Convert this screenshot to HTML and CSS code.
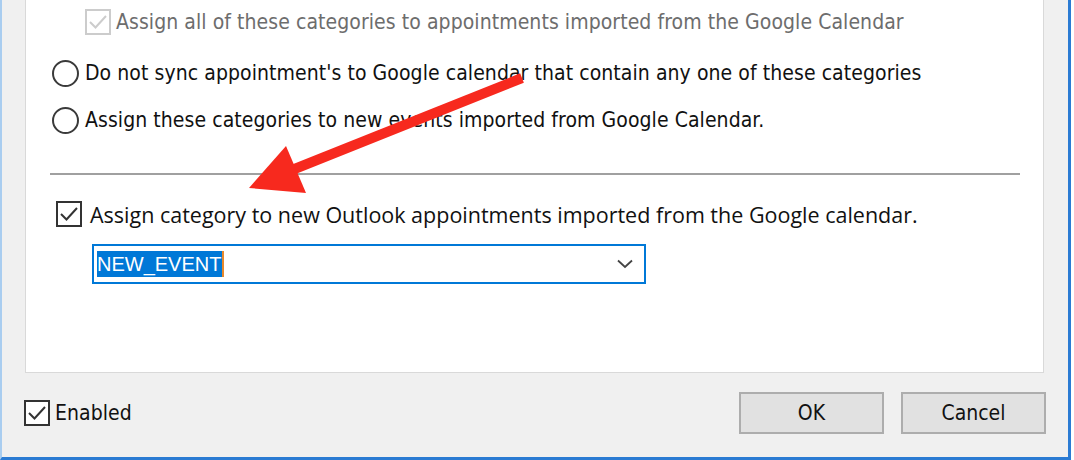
FILE: index.html
```html
<!DOCTYPE html>
<html lang="en">
<head>
  <meta charset="UTF-8" />
  <title>Category settings</title>
  <link rel="stylesheet" href="styles.css">
</head>
<body>

<div class="window">
  <div class="panel">
    <div class="option option--sub option--disabled">
      <svg class="check" width="26" height="26" viewBox="0 0 26 26">
        <rect x="1" y="1" width="24" height="24" fill="#fff" stroke="#cccccc" stroke-width="2"/>
        <polyline points="5,13 10.5,18.5 21,7" fill="none" stroke="#cccccc" stroke-width="2"/>
      </svg>
      <span>Assign all of these categories to appointments imported from the Google Calendar</span>
    </div>
    <div class="option option--radio">
      <span class="radio"></span>
      <span>Do not sync appointment's to Google calendar that contain any one of these categories</span>
    </div>
    <div class="option option--radio option--second">
      <span class="radio"></span>
      <span>Assign these categories to new events imported from Google Calendar.</span>
    </div>

    <div class="separator"></div>

    <div class="option option--new">
      <svg class="check" width="26" height="26" viewBox="0 0 26 26">
        <rect x="1" y="1" width="24" height="24" fill="#fff" stroke="#333333" stroke-width="2"/>
        <polyline points="5,13 10.5,18.5 21,7" fill="none" stroke="#333333" stroke-width="2"/>
      </svg>
      <span>Assign category to new Outlook appointments imported from the Google calendar.</span>
    </div>

    <div class="combo">
      <span class="combo__value">NEW_EVENT</span>
      <svg class="combo__chevron" width="16" height="10" viewBox="0 0 16 10">
        <polyline points="1,1.5 8,8 15,1.5" fill="none" stroke="#444" stroke-width="1.8"/>
      </svg>
    </div>
  </div>

  <div class="footer">
    <label class="option option--enabled">
      <svg class="check" width="26" height="26" viewBox="0 0 26 26">
        <rect x="1" y="1" width="24" height="24" fill="#fff" stroke="#333333" stroke-width="2"/>
        <polyline points="5,13 10.5,18.5 21,7" fill="none" stroke="#333333" stroke-width="2"/>
      </svg>
      <span>Enabled</span>
    </label>
    <div class="buttons">
      <button class="button">OK</button>
      <button class="button">Cancel</button>
    </div>
  </div>
</div>

<svg class="arrow" width="1074" height="460" viewBox="0 0 1074 460">
  <line x1="522" y1="78" x2="292" y2="170" stroke="#f7291e" stroke-width="10"/>
  <polygon points="249,188 286,146 306,193" fill="#f7291e"/>
</svg>

</body>
</html>
```

FILE: styles.css
```css
* {
  box-sizing: border-box;
}
body {
  margin: 0;
  background: #ffffff;
  font-family: "DejaVu Sans Condensed", "DejaVu Sans", sans-serif;
  font-stretch: condensed;
  font-size: 21px;
  letter-spacing: 0.07px;
  color: #111;
}

.window {
  position: relative;
  width: 1071px;
  height: 460px;
  background: #f0f0f0;
  border-left: 2px solid #a9cdf0;
  border-right: 3px solid #2b7bd3;
  border-bottom: 3px solid #2b7bd3;
  display: flex;
  flex-direction: column;
}

.panel {
  margin-left: 23px;
  width: 1019px;
  height: 373px;
  background: #fff;
  border: 1px solid #d9d9d9;
  border-top: none;
  padding-top: 9px;
  display: flex;
  flex-direction: column;
}

.option {
  display: flex;
  align-items: center;
  height: 26px;
  white-space: nowrap;
}
.option--sub {
  padding-left: 59px;
  gap: 5px;
}
.option--disabled {
  color: #6d6d6d;
}
.option--radio {
  margin-top: 25px;
  padding-left: 26px;
  gap: 6px;
}
.option--second {
  margin-top: 21px;
}
.option--new {
  margin-top: 26px;
  padding-left: 30px;
  gap: 8px;
  font-family: "Open Sans", "Noto Sans", sans-serif;
  font-stretch: normal;
  font-size: 21.5px;
  letter-spacing: 0;
}
.option--enabled {
  gap: 5px;
}

.check {
  flex: none;
  display: block;
}
.radio {
  flex: none;
  width: 27px;
  height: 27px;
  border: 2px solid #3a3a3a;
  border-radius: 50%;
  background: #fff;
}

.separator {
  margin: 40px 0 0 24px;
  width: 970px;
  height: 2px;
  background: #a0a0a0;
}

.combo {
  margin: 17px 0 0 66px;
  width: 554px;
  height: 40px;
  border: 2px solid #0078d7;
  display: flex;
  align-items: center;
  justify-content: space-between;
  padding: 0 11px 0 3px;
  font-family: "Liberation Sans", Arial, sans-serif;
  font-stretch: normal;
  font-size: 20px;
  letter-spacing: 0;
}
.combo__value {
  background: #0078d7;
  color: #fff;
  line-height: 26px;
  padding-right: 1px;
  border-right: 2px solid #e8892c;
}
.combo__chevron {
  display: block;
}

.footer {
  flex: 1;
  display: flex;
  align-items: center;
  justify-content: space-between;
  padding: 0 22px 4px 22px;
}
.buttons {
  display: flex;
  gap: 17px;
}
.button {
  width: 145px;
  height: 42px;
  background: #e1e1e1;
  border: 2px solid #adadad;
  font-family: inherit;
  font-stretch: condensed;
  font-size: 21px;
  color: #111;
  padding: 0;
}

.arrow {
  position: absolute;
  top: 0;
  left: 0;
  pointer-events: none;
}
```
